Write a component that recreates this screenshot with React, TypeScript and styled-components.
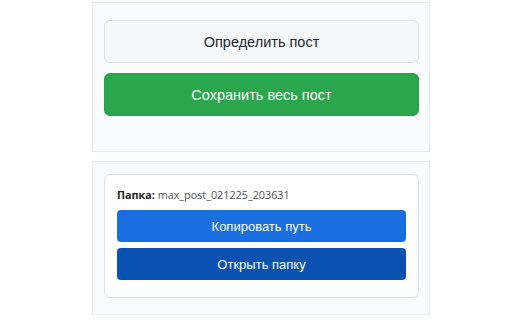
import React from "react";
import styled, { createGlobalStyle } from "styled-components";

const Global = createGlobalStyle`
  html, body { margin: 0; padding: 0; background: #ffffff; }
  body { font-family: "Liberation Sans", Arial, sans-serif; width: 512px; height: 320px; overflow: hidden; }
`;

const Page = styled.div`
  width: 338px;
  margin-left: 92px;
  margin-top: 2px;
  display: flex;
  flex-direction: column;
  gap: 9px;
`;

const Section = styled.section<{ $pt: number; $pb: number }>`
  background: #fafbfc;
  border: 1px solid #eaecef;
  padding: ${(p) => p.$pt}px 10px ${(p) => p.$pb}px 11px;
  display: flex;
  flex-direction: column;
  gap: 10px;
`;

const Button = styled.button<{ $variant: "light" | "success" }>`
  height: 43px;
  border-radius: 6px;
  font-family: "Liberation Sans", Arial, sans-serif;
  font-size: 14.5px;
  cursor: pointer;
  border: 1px solid ${(p) => (p.$variant === "light" ? "#dcdfe6" : "#27a048")};
  background: ${(p) => (p.$variant === "light" ? "#f7f8fa" : "#2ba64d")};
  color: ${(p) => (p.$variant === "light" ? "#23272e" : "#ffffff")};
`;

const Card = styled.div`
  background: #ffffff;
  border: 1px solid #dfe2e7;
  border-radius: 6px;
  padding: 12px 12px 17px 12px;
  display: flex;
  flex-direction: column;
  gap: 6px;
`;

const Label = styled.div`
  font-family: "Open Sans", "Liberation Sans", sans-serif;
  font-size: 10.8px;
  color: #555;
  line-height: 16px;
  margin-bottom: 1px;
  b { color: #222; font-weight: 700; }
`;

const BlueButton = styled.button<{ $dark?: boolean }>`
  height: 32px;
  border: none;
  border-radius: 4px;
  font-family: "Liberation Sans", Arial, sans-serif;
  font-size: 13px;
  color: #fff;
  cursor: pointer;
  background: ${(p) => (p.$dark ? "#0b51b2" : "#1a6fe0")};
`;

export default function App() {
  return (
    <>
      <Global />
      <Page>
        <Section $pt={17} $pb={35}>
          <Button $variant="light">Определить пост</Button>
          <Button $variant="success">Сохранить весь пост</Button>
        </Section>
        <Section $pt={12} $pb={16}>
          <Card>
            <Label>
              <b>Папка:</b> max_post_021225_203631
            </Label>
            <BlueButton>Копировать путь</BlueButton>
            <BlueButton $dark>Открыть папку</BlueButton>
          </Card>
        </Section>
      </Page>
    </>
  );
}
